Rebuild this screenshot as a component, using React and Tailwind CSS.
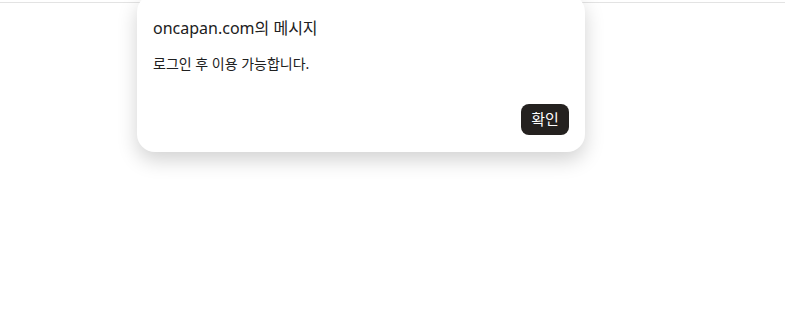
import React from 'react';

export default function App() {
  return (
    <div
      className="relative h-[335px] w-[785px] overflow-hidden bg-white"
      style={{ fontFamily: '"Noto Sans", "Noto Sans CJK KR", sans-serif' }}
    >
      <div className="mt-[2px] h-px w-full bg-[#e3e3e3]" />

      <div className="absolute left-[137px] top-[-6px] flex h-[158px] w-[448px] flex-col rounded-[18px] bg-white px-4 pb-[17px] pt-[22px] shadow-[0_8px_20px_rgba(0,0,0,0.18)]">
        <div className="text-[16px] leading-[24px] text-[#202020]">oncapan.com의 메시지</div>
        <div className="mt-[14px] text-[14px] leading-[20px] text-[#202020]">로그인 후 이용 가능합니다.</div>
        <div className="mt-auto flex justify-end">
          <button className="h-[31px] w-[48px] rounded-[8px] bg-[#24211f] text-[15px] text-white">
            확인
          </button>
        </div>
      </div>
    </div>
  );
}
